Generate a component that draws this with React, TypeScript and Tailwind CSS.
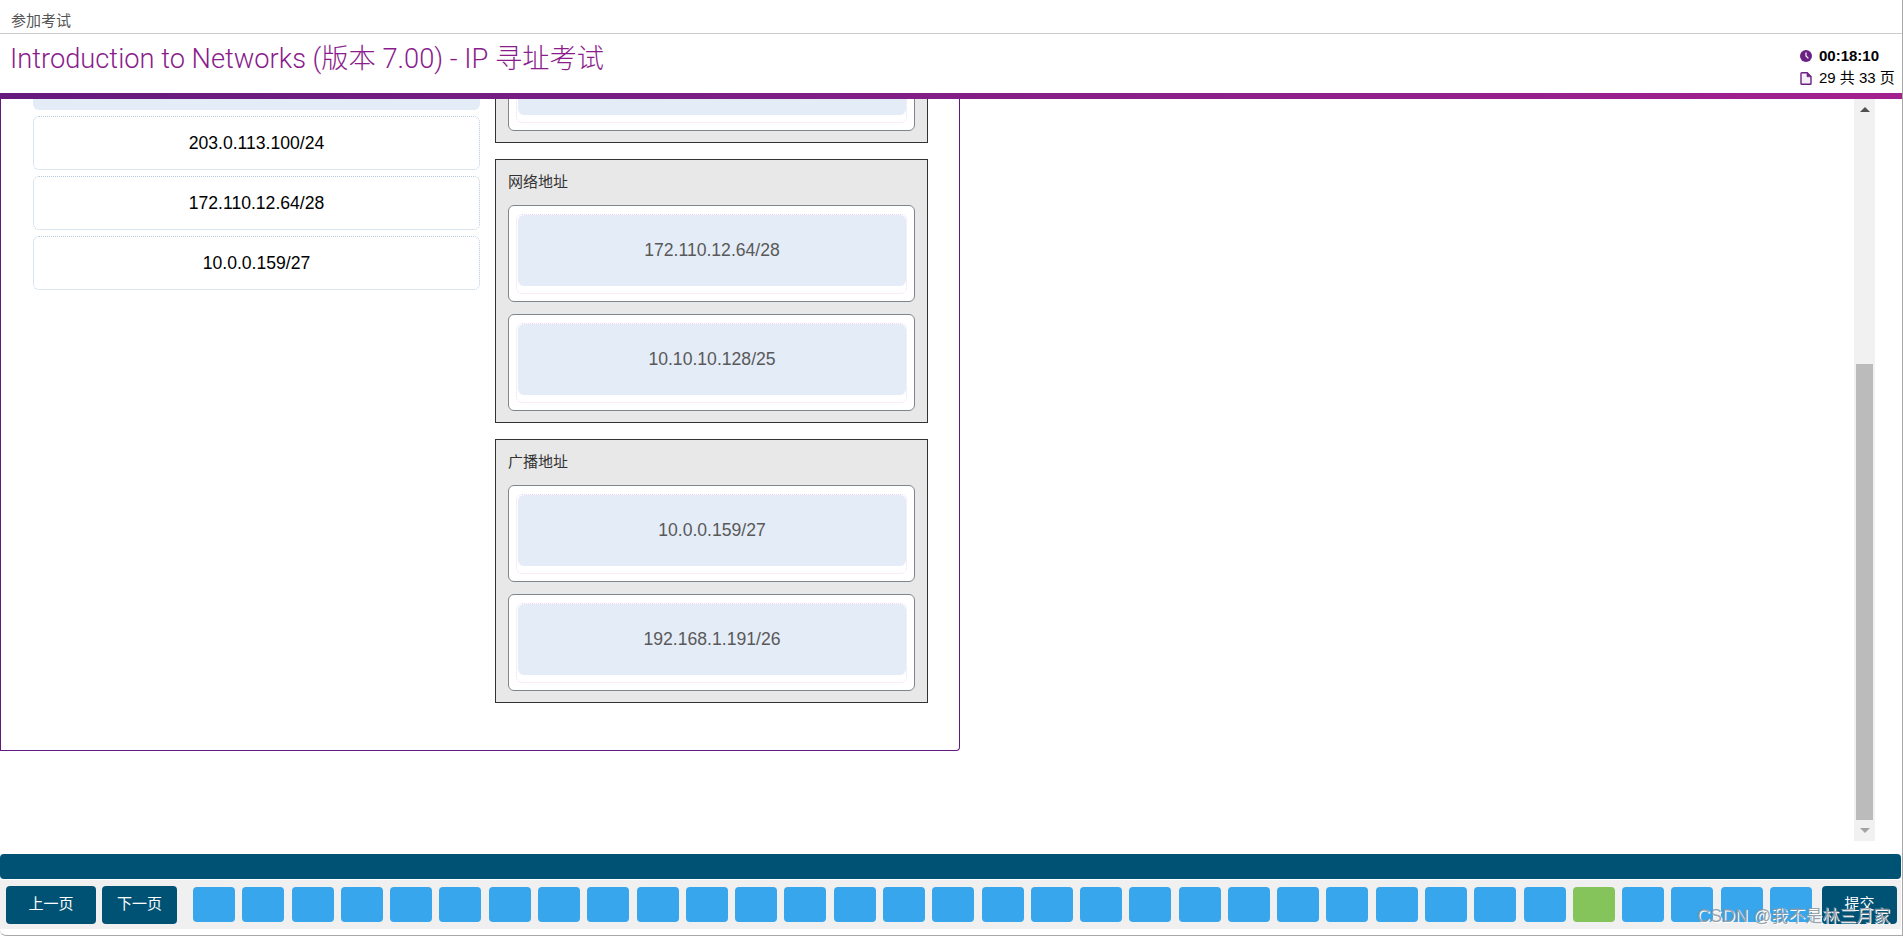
const font = "font-['Liberation_Sans','Noto_Sans_CJK_SC',sans-serif]";

const AnswerCard = ({ text }: { text?: string }) => (
  <div className="rounded-md border border-[#7f868e] bg-white h-[97px] pt-2 px-[7px]">
    <div className="h-[80px] rounded-md border border-dotted border-[#f3d6f5] pl-px pb-[7px]">
      <div className="h-[71px] rounded-md bg-[#e4ecf7] flex items-center justify-center text-[17.6px] text-[#595959]">
        {text}
      </div>
    </div>
  </div>
);

const DropBox = ({ label, items }: { label: string; items: string[] }) => (
  <div className="border border-[#333] bg-[#e8e8e8] h-[264px] px-3">
    <div className="h-[45px] flex items-center text-[15px] text-[#333]">{label}</div>
    <div className="flex flex-col gap-3">
      {items.map((t) => (
        <AnswerCard key={t} text={t} />
      ))}
    </div>
  </div>
);

const ChoiceCard = ({ text }: { text: string }) => (
  <div className="h-[54px] rounded-md border border-dotted border-[#b5cbe0] flex items-center justify-center text-[17.6px] text-black">
    {text}
  </div>
);

const App = () => {
  return (
    <div className={`h-screen overflow-hidden flex flex-col bg-white border-r border-[#a8a8a8] ${font}`}>
      {/* Top strip */}
      <div className="h-[34px] shrink-0 border-b border-[#ccc] pl-[11px] pt-[13px] text-[15px] leading-[15px] text-[#555]">
        参加考试
      </div>

      {/* Exam header */}
      <div className="h-[59px] shrink-0 flex justify-between pl-[10px]">
        <h1 className="font-['Roboto','Noto_Sans_CJK_SC',sans-serif] font-light text-[27.25px] leading-[51px] text-[#8a1c8c]">
          Introduction to Networks (版本 7.00) - IP 寻址考试
        </h1>
        <div className="w-[102px] pt-[11px] text-[15px] leading-[22px] text-black">
          <div className="flex items-center gap-[7px] font-bold">
            <svg width="12" height="12" viewBox="0 0 12 12" className="shrink-0">
              <circle cx="6" cy="6" r="6" fill="#6a2184" />
              <path d="M6 2.4V6l2.4 2.4" fill="none" stroke="#fff" strokeWidth="1.2" />
            </svg>
            00:18:10
          </div>
          <div className="flex items-center gap-[7px]">
            <svg width="12" height="13" viewBox="0 0 12 13" className="shrink-0">
              <path d="M1 1.5a.8.8 0 0 1 .8-.8h5.4L11 4.5v7a.8.8 0 0 1-.8.8H1.800a.8.8 0 0 1-.8-.8z" fill="#f4eef7" stroke="#6a2184" strokeWidth="1.4" />
              <path d="M7 1v3.800h4" fill="#6a2184" stroke="#6a2184" strokeWidth="0.6" />
            </svg>
            29 共 33 页
          </div>
        </div>
      </div>
      <div className="h-[6px] shrink-0 bg-linear-to-r from-[#651a7d] to-[#a3218f]" />

      {/* Question area */}
      <div className="flex-1 min-h-0 flex">
        <div className="w-[960px] h-[652px] shrink-0 overflow-hidden flex gap-[15px] pl-8 border-x border-b border-[#5f1a7f] rounded-br-sm">
          <div className="w-[447px] flex flex-col gap-1.5">
            <div className="h-[54px] -mt-[43px] shrink-0 rounded-md bg-[#e4ecf7]" />
            <ChoiceCard text="203.0.113.100/24" />
            <ChoiceCard text="172.110.12.64/28" />
            <ChoiceCard text="10.0.0.159/27" />
          </div>
          <div className="w-[433px] flex flex-col gap-4">
            <div className="border border-[#333] bg-[#e8e8e8] h-[111px] -mt-[67px] shrink-0 px-3 pt-px">
              <AnswerCard />
            </div>
            <DropBox label="网络地址" items={['172.110.12.64/28', '10.10.10.128/25']} />
            <DropBox label="广播地址" items={['10.0.0.159/27', '192.168.1.191/26']} />
          </div>
        </div>
        <div className="flex-1" />

        {/* Scrollbar */}
        <div className="w-[21px] h-[742px] shrink-0 mr-[27px] bg-[#f1f1f1] flex flex-col items-center">
          <div className="h-[21px] shrink-0 flex items-center justify-center">
            <div className="w-0 h-0 border-x-[5px] border-x-transparent border-b-[5px] border-b-[#505050]" />
          </div>
          <div className="w-[17px] h-[456px] mt-[244px] bg-[#bbbbbb]" />
          <div className="h-[21px] shrink-0 flex items-center justify-center">
            <div className="w-0 h-0 border-x-[5px] border-x-transparent border-t-[5px] border-t-[#a3a3a3]" />
          </div>
        </div>
      </div>

      {/* Footer nav */}
      <div className="shrink-0 relative">
        <div className="h-[25px] mr-px rounded-[4px] bg-[#005275]" />
        <div className="h-[49px] mt-px mr-px flex items-center bg-[#f0f0f0] pl-1.5">
          <button className="w-[90px] h-[38px] rounded-[4px] bg-[#005275] text-[15px] text-white">上一页</button>
          <button className="w-[75px] h-[38px] ml-1.5 rounded-[4px] bg-[#005275] text-[15px] text-white">下一页</button>
          <div className="w-[1619px] ml-4 flex justify-between">
            {Array.from({ length: 33 }, (_, i) => (
              <div key={i} className={`w-[42px] h-[35px] rounded-[4px] ${i === 28 ? 'bg-[#85c45a]' : 'bg-[#38a6ec]'}`} />
            ))}
          </div>
          <button className="w-[75px] h-[38px] ml-2.5 rounded-[4px] bg-[#005275] text-[15px] text-white">提交</button>
        </div>
        <div className="h-[7px] border-b border-[#a8a8a8] rounded-bl-md" />

        {/* CSDN watermark sits over the nav */}
        <div className="absolute left-[1697px] top-[51px] text-[18px] leading-[22px] text-[#8c98a3]/90 [text-shadow:1px_1px_0_#fff]">
          CSDN @<span className="text-[17px]">我不是林三月家</span>
        </div>
      </div>
    </div>
  );
};

export default App;
